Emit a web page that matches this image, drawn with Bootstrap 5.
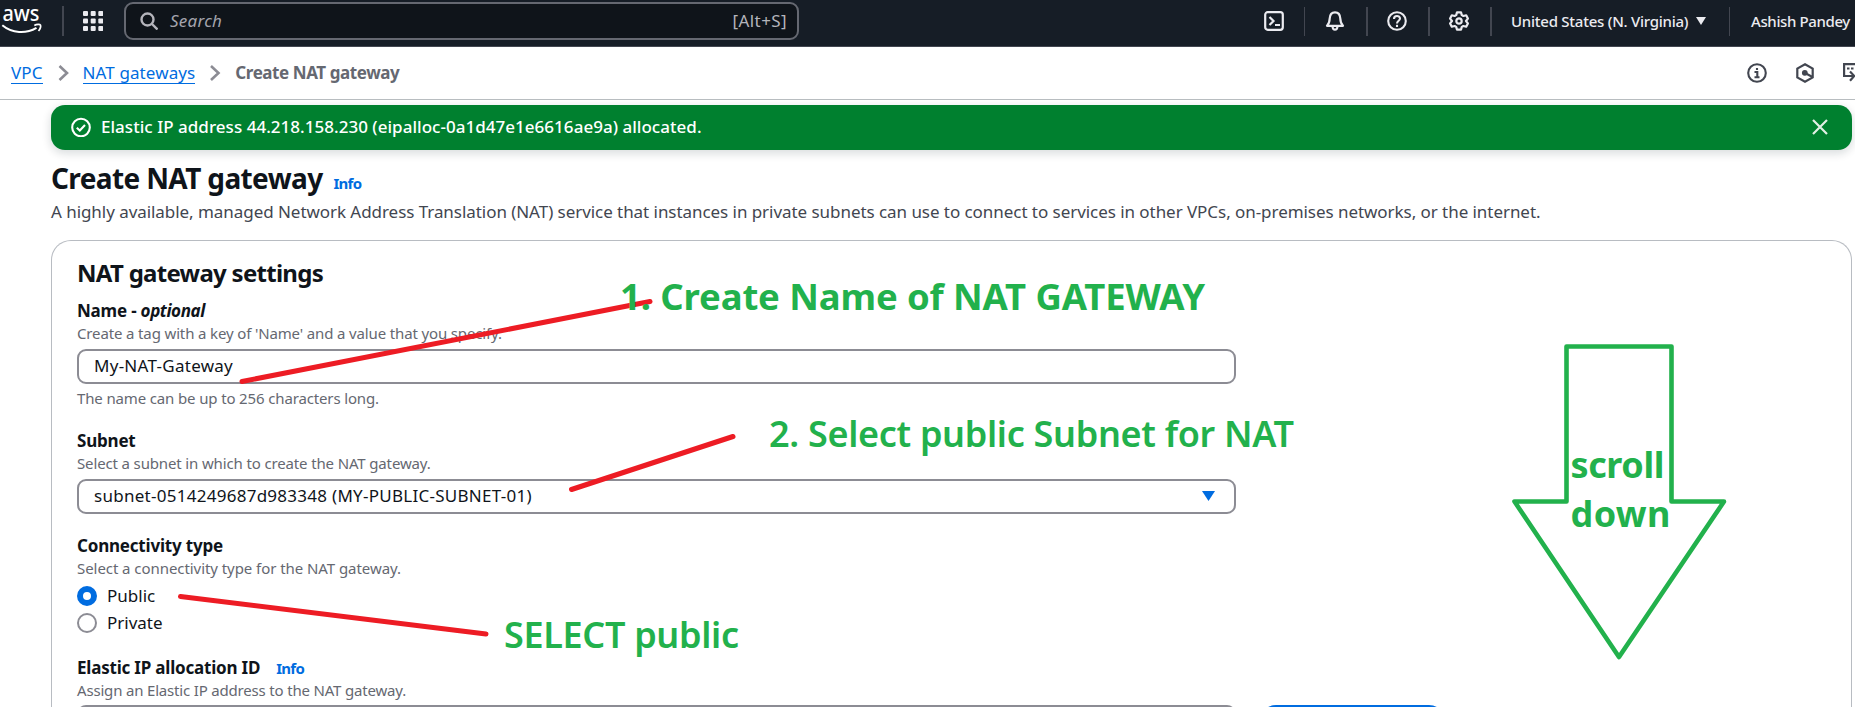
<!DOCTYPE html>
<html lang="en">
<head>
<meta charset="utf-8">
<meta name="viewport" content="width=device-width, initial-scale=1">
<title>Create NAT gateway</title>
<link href="https://cdn.jsdelivr.net/npm/bootstrap@5.3.0/dist/css/bootstrap.min.css" rel="stylesheet">
<style>
  body{font-family:"Noto Sans","Open Sans",sans-serif;font-size:17px;line-height:24px;color:#0f141a;height:100vh;overflow:hidden;background:#fff}
  a,.aws-link{color:#006ce0}
  .topnav{height:47px;background:#161d26;border-bottom:1px solid #424650;padding:0 0 4px;color:#ebebf0}
  .logo-cell{width:64px;height:30px;border-right:2px solid #424650}
  .logo-cell svg{display:block;margin-top:-6px}
  .logo-cell text{font-size:21.5px;font-weight:500}
  .grid-cell{width:60px;padding-left:19px}
  .searchbox{width:675px;height:38px;border:2px solid #656871;border-radius:9px;background:#0f141a;color:#a4a4ad;padding:0 10px 0 14px}
  .searchbox em{margin-left:12px;letter-spacing:.25px}
  .kbd-hint{letter-spacing:.4px;color:#b4b4bb}
  .nav-cell{height:29px;border-right:2px solid #424650;width:62px;padding-right:2px}
  .nav-cell svg,.crumbs svg,.tools svg{display:block}
  .cell-first{width:61px;border-right-width:1px;padding-right:0}
  .cell-bell{width:63px}
  .nav-words{font-size:15px;font-weight:500;white-space:nowrap}
  .cell-region{width:238px;padding-left:19px;border-right-width:1px;letter-spacing:-.25px}
  .cell-user{width:125px;padding-left:21px;border-right:0;letter-spacing:-.38px}
  .crumbs{height:53px;border-bottom:1px solid #b8bdc0;padding:0 0 0 11px}
  .crumbs a{text-decoration:none;border-bottom:1px solid #006ce0;line-height:21px;height:22px;letter-spacing:.1px}
  .crumbs strong{font-weight:700;letter-spacing:-.42px;color:#656871}
  .tools{width:108px;gap:29px;overflow:hidden}
  .page{height:607px;padding:5px 3px 0 51px;overflow:hidden}
  .flash{height:45px;border-radius:14px;background:#00802f;color:#fff;padding:0 24px 1px 20px;margin-bottom:12px;box-shadow:0 3px 9px 1px rgba(0,28,36,.14)}
  .flash span{margin-left:10px;font-weight:500;letter-spacing:.03px}
  h1{font-size:28px;line-height:32px;font-weight:700;letter-spacing:-.62px;margin:0}
  .info-link{font-size:15px;line-height:20px;font-weight:700;letter-spacing:-.75px;text-decoration:none}
  .title-row .info-link{margin-left:11px}
  .intro{letter-spacing:-.052px;margin:6px 0 16px;color:#424650;white-space:nowrap}
  .panel{border:1px solid #b8bcc2;border-bottom:0;border-radius:20px 20px 0 0;padding:17px 25px 0;height:467px;overflow:hidden}
  h2{font-size:24px;line-height:30px;font-weight:700;letter-spacing:-.72px;margin:0 0 11px}
  .f-label{font-weight:700;letter-spacing:-.2px}
  .f-label em{letter-spacing:-.4px}
  .f-hint{font-size:15px;line-height:20px;letter-spacing:-.14px;color:#656871}
  .above{margin:0 0 6px}
  .below{margin:4px 0 21px}
  .conn-label{margin-top:20px}
  .conn-hint{letter-spacing:-.06px}
  .field{width:1159px;height:35px;border:2px solid #8c8c94;border-radius:9px;background:#fff;padding:0 19px 1px 15px;letter-spacing:.27px}
  .pick{width:20px;height:20px;border:2px solid #8c8c94;border-radius:50%;margin-right:10px}
  .pick.on{border:6px solid #006ce0}
  .pick-row{margin-bottom:3px}
  .eip-row{margin-top:21px}
  .eip-hint{letter-spacing:-.18px;margin-bottom:5px}
  .alloc{width:185px;height:35px;border-radius:16px;background:#006ce0;border:0}
  .notes{left:0;top:0;pointer-events:none}
</style>
</head>
<body class="position-relative">
<header class="topnav d-flex align-items-center">
  <div class="logo-cell">
    <svg width="44" height="36" fill="none" stroke="#fff">
      <text x="2.5" y="21.3" fill="#fff" stroke="none" textLength="37" lengthAdjust="spacingAndGlyphs">aws</text>
      <path d="M2.3 25.3C12 33.500 26 34 36.500 27.800" stroke-width="2"/>
      <path d="M34.300 25.600C37 24 40 24.300 40.500 25.200C41 26.500 40 29 38.500 31" stroke-width="1.700"/>
    </svg>
  </div>
  <div class="grid-cell">
    <svg class="d-block" width="20" height="20" fill="#ebebf0"><g id="gr"><rect width="5" height="5" rx="1"/><rect x="7.700" width="5" height="5" rx="1"/><rect x="15.300" width="5" height="5" rx="1"/></g><use href="#gr" y="7.500"/><use href="#gr" y="15"/></svg>
  </div>
  <div class="searchbox d-flex align-items-center">
    <svg width="18" height="18" fill="none" stroke="#b4b4bb" stroke-width="2.400"><circle cx="7.500" cy="7.500" r="6"/><path d="M12 12l5.500 5.500"/></svg>
    <em>Search</em><span class="kbd-hint ms-auto">[Alt+S]</span>
  </div>
  <div class="d-flex align-items-center ms-auto">
    <div class="nav-cell cell-first d-flex align-items-center justify-content-center">
      <svg width="20" height="20" fill="none" stroke="#ebebf0" stroke-width="2.200"><rect x="1.200" y="1.200" width="17.600" height="17.600" rx="2.500"/><path d="M5.500 6l4 4-4 4M11 14h5"/></svg>
    </div>
    <div class="nav-cell cell-bell d-flex align-items-center justify-content-center">
      <svg width="20" height="20" fill="none" stroke="#ebebf0" stroke-width="2.200" stroke-linejoin="round"><path d="M2 14.800C4.500 12.500 4.600 10.500 4.700 7.500C4.900 3.500 7 1.300 10 1.300S15.100 3.500 15.300 7.500C15.400 10.500 15.500 12.500 18 14.800z"/><path d="M7.500 15.500c.2 2.200 1 3.200 2.500 3.200s2.300-1 2.500-3.200"/></svg>
    </div>
    <div class="nav-cell d-flex align-items-center justify-content-center">
      <svg width="20" height="20" fill="none" stroke="#ebebf0" stroke-width="2.100"><circle cx="10" cy="10" r="8.800"/><path d="M7 8c0-4 6-3.800 6-.5 0 2.300-3 2.200-3 5"/><path d="M10 13.800v2.200"/></svg>
    </div>
    <div class="nav-cell d-flex align-items-center justify-content-center">
      <svg width="20" height="20" fill="none" stroke="#ebebf0" stroke-width="2.200" stroke-linejoin="round"><path d="M8 1.400h4l.8 2.700 1.600.9 2.800-.7 1.700 3.300-1.900 2.400 1.900 2.400-1.700 3.300-2.800-.7-1.600.9-.8 2.700H8l-.8-2.700-1.600-.9-2.800.7-1.700-3.300L3 10 1.100 7.600l1.700-3.300 2.800.7 1.600-.9z"/><circle cx="10" cy="10" r="2.700"/></svg>
    </div>
    <div class="nav-cell nav-words cell-region d-flex align-items-center">United States (N. Virginia)
      <svg class="ms-2" width="10" height="8" fill="#ebebf0"><path d="M0 0h10L5 8z"/></svg>
    </div>
    <div class="nav-cell nav-words cell-user d-flex align-items-center">Ashish Pandey</div>
  </div>
</header>

<nav class="crumbs d-flex align-items-center">
  <a href="#">VPC</a>
  <svg width="40" height="16" fill="none" stroke="#8c8c94" stroke-width="2.600"><path d="M16.500 1l7.500 7-7.500 7"/></svg>
  <a href="#">NAT gateways</a>
  <svg width="40" height="16" fill="none" stroke="#8c8c94" stroke-width="2.600"><path d="M16 1l7.500 7-7.500 7"/></svg>
  <strong>Create NAT gateway</strong>
  <div class="tools d-flex align-items-center ms-auto">
    <svg class="flex-shrink-0" width="20" height="20" fill="none" stroke="#424650" stroke-width="2.100"><circle cx="10" cy="10" r="8.800"/><path d="M7.500 9h2.800v5M7.500 14.300h5M10 5v2"/></svg>
    <svg class="flex-shrink-0" width="18" height="20" fill="none" stroke="#424650" stroke-width="2.200"><path d="M9 1.300l7.700 4.300v8.800L9 18.700l-7.700-4.300V5.600z"/><circle cx="8.800" cy="9.800" r="2.900" fill="#424650" stroke="none"/><path d="M9 10l7.500 4"/></svg>
    <svg class="flex-shrink-0" width="20" height="20" fill="none" stroke="#424650" stroke-width="2.200"><path d="M4.500 13H1.100V1.100H20M4 5.500h2.500M8 5.500h2.500M12 5.500h3M4.500 13H11M7 8.500l4.300 4.500L7 17.800"/><path d="M12.500 18h3" stroke-width="2"/></svg>
  </div>
</nav>

<main class="page">
  <div class="flash d-flex align-items-center">
    <svg width="20" height="20" fill="none" stroke="#fff" stroke-width="2.100"><circle cx="10" cy="10.500" r="8.800"/><path d="M5.800 10.700l3 2.800 5.200-5.500"/></svg>
    <span>Elastic IP address 44.218.158.230 (eipalloc-0a1d47e1e6616ae9a) allocated.</span>
    <svg class="ms-auto" width="16" height="16" fill="none" stroke="#e1efe5" stroke-width="2.200"><path d="M1 1l14 14M15 1L1 15"/></svg>
  </div>
  <div class="title-row d-flex align-items-baseline">
    <h1>Create NAT gateway</h1><a class="info-link" href="#">Info</a>
  </div>
  <p class="intro">A highly available, managed Network Address Translation (NAT) service that instances in private subnets can use to connect to services in other VPCs, on-premises networks, or the internet.</p>

  <section class="panel">
    <h2>NAT gateway settings</h2>
    <div class="f-label">Name - <em>optional</em></div>
    <div class="f-hint above">Create a tag with a key of 'Name' and a value that you specify.</div>
    <div class="field d-flex align-items-center">My-NAT-Gateway</div>
    <div class="f-hint below">The name can be up to 256 characters long.</div>

    <div class="f-label">Subnet</div>
    <div class="f-hint above">Select a subnet in which to create the NAT gateway.</div>
    <div class="field d-flex align-items-center">subnet-0514249687d983348 (MY-PUBLIC-SUBNET-01)
      <svg class="ms-auto" width="13" height="10" fill="#006ce0"><path d="M0 0h13L6.500 10z"/></svg>
    </div>

    <div class="f-label conn-label">Connectivity type</div>
    <div class="f-hint above conn-hint">Select a connectivity type for the NAT gateway.</div>
    <div class="d-flex align-items-center pick-row"><i class="pick on"></i>Public</div>
    <div class="d-flex align-items-center pick-row"><i class="pick"></i>Private</div>

    <div class="d-flex align-items-baseline eip-row">
      <div class="f-label">Elastic IP allocation ID</div><a class="info-link ms-3" href="#">Info</a>
    </div>
    <div class="f-hint above eip-hint">Assign an Elastic IP address to the NAT gateway.</div>
    <div class="d-flex gap-4"><div class="field"></div><div class="alloc"></div></div>
  </section>
</main>

<!-- Tutorial annotations drawn over the console page -->
<svg class="notes position-absolute" width="1855" height="707" fill="none">
  <g stroke="#ed1c24" stroke-width="5" stroke-linecap="round">
    <path d="M242 381.500L650 301.500"/><path d="M571.500 489.500L733 436.500"/><path d="M180.500 596.500L486 634"/>
  </g>
  <path d="M1566.500 346.500h105v155h52.500L1619 657 1514.500 501.500h52z" stroke="#22b14c" stroke-width="4.600" stroke-linejoin="round"/>
  <g fill="#22b14c" font-size="36.500" font-weight="700">
    <text x="620" y="309.500" textLength="585">1. Create Name of NAT GATEWAY</text>
    <text x="769" y="446.500" font-weight="600" font-size="36" textLength="525">2. Select public Subnet for NAT</text>
    <text x="504" y="648" font-weight="600" font-size="36" textLength="235">SELECT public</text>
    <text x="1570.500" y="477.500" font-size="36" textLength="94">scroll</text>
    <text x="1570.500" y="527" font-size="36" textLength="100">down</text>
  </g>
</svg>
<script src="https://cdn.jsdelivr.net/npm/bootstrap@5.3.0/dist/js/bootstrap.bundle.min.js"></script>
</body>
</html>
